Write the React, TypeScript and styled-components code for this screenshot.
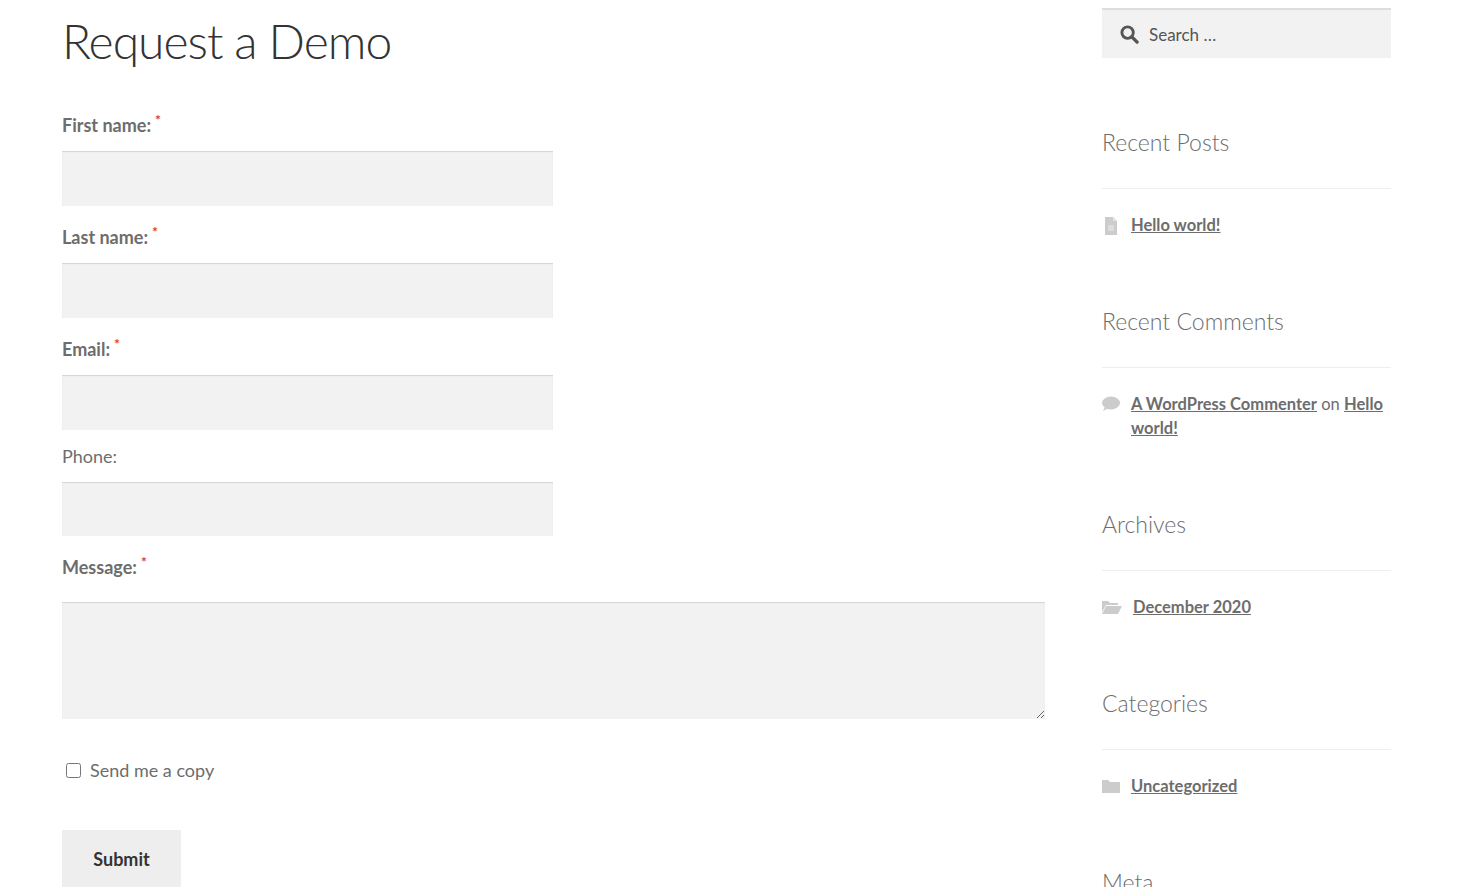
import React from "react";
import styled, { createGlobalStyle } from "styled-components";

const Global = createGlobalStyle`
  body { margin: 0; background: #fff; font-family: Lato, "Open Sans", sans-serif; color: #6d6d6d; }
  * { box-sizing: border-box; }
`;

const Page = styled.div`
  display: flex;
  padding-left: 62px;
  gap: 57px;
  height: 887px;
  overflow: hidden;
`;
const Main = styled.main`width: 983px; display: flex; flex-direction: column;`;
const Title = styled.h1`
  margin: 10px 0 35px;
  font-size: 48px; font-weight: 300; color: #333; letter-spacing: -1px; line-height: 62px;
`;
const Label = styled.label`
  display: block; font-size: 18px; font-weight: ${p => (p.$bold ? 700 : 400)};
  line-height: 26px; margin-bottom: 13px; color: #6d6d6d;
`;
const Req = styled.sup`color: #e2401c; font-size: 14px; margin-left: 4px;`;
const Input = styled.input`
  display: block; width: ${p => p.$w}px; height: ${p => p.$h}px; border: 0;
  background: #f2f2f2; box-shadow: inset 0 1px 1px rgba(0,0,0,.125);
  margin-bottom: 13px; font-family: inherit;
`;
const Area = styled.textarea`
  display: block; width: 983px; height: 121px; border: 0; resize: vertical;
  background: #f2f2f2; box-shadow: inset 0 1px 1px rgba(0,0,0,.125); margin-top: 9px;
`;
const Check = styled.label`
  display: flex; align-items: center; gap: 9px; margin: 40px 0 0 4px; font-size: 18px;
  input { margin: 0; width: 15px; height: 15px; }
`;
const Submit = styled.button`
  margin-top: 49px; width: 119px; height: 57px; border: 0; background: #eee; color: #333;
  font-family: inherit; font-weight: 700; font-size: 18px;
`;

const Side = styled.aside`width: 289px; padding-top: 8px;`;
const Search = styled.div`
  height: 50px; background: #f2f2f2; border-top: 2px solid #ddd; display: flex; align-items: center;
  padding-left: 18px; gap: 10px; font-size: 17px; color: #555;
`;
const Widget = styled.section`margin-top: ${p => p.$mt}px;`;
const WTitle = styled.h2`
  margin: 0; font-size: 23px; font-weight: 300; color: #6d6d6d; line-height: 30px;
  padding-bottom: 31px; border-bottom: 1px solid #eee;
`;
const Item = styled.div`
  display: flex; gap: 11px; margin-top: 24px; font-size: 16.5px; line-height: 24px;
  svg { flex: none; margin-top: 4px; }
`;
const A = styled.a`color: #6d6d6d; font-weight: 700; text-decoration: underline;`;

const Doc = () => (<svg width="18" height="18" viewBox="0 0 16 18"><path d="M2 0h8l4 4v14H2z" fill="#ccc"/><path d="M10 0v4h4" fill="#e6e6e6"/><path d="M5 9h6M5 11h6M5 13h6" stroke="#eee" strokeWidth="1"/></svg>);
const Bubble = () => (<svg width="18" height="16" viewBox="0 0 18 16"><ellipse cx="9" cy="7" rx="9" ry="6.5" fill="#ccc"/><path d="M3 11l-2 4 6-3z" fill="#ccc"/></svg>);
const OpenFolder = () => (<svg width="20" height="16" viewBox="0 0 20 16"><path d="M0 2h6l2 2h8v2H4L0 13z" fill="#ccc"/><path d="M4 7h16l-4 8H0z" fill="#ccc"/></svg>);
const Folder = () => (<svg width="18" height="16" viewBox="0 0 18 16"><path d="M0 2h6l2 2h10v11H0z" fill="#ccc"/></svg>);

export default function App() {
  return (
    <Page>
      <Global />
      <Main>
        <Title>Request a Demo</Title>
        <Label $bold>First name:<Req>*</Req></Label>
        <Input $w={491} $h={57} />
        <Label $bold>Last name:<Req>*</Req></Label>
        <Input $w={491} $h={57} />
        <Label $bold>Email:<Req>*</Req></Label>
        <Input $w={491} $h={57} />
        <Label>Phone:</Label>
        <Input $w={491} $h={56} />
        <Label $bold>Message:<Req>*</Req></Label>
        <Area />
        <Check><input type="checkbox" /> Send me a copy</Check>
        <div><Submit>Submit</Submit></div>
      </Main>
      <Side>
        <Search>
          <svg width="19" height="19" viewBox="0 0 20 20"><circle cx="8" cy="8" r="6" fill="none" stroke="#555" strokeWidth="3"/><path d="M12.5 12.5L18 18" stroke="#555" strokeWidth="3.5" strokeLinecap="round"/></svg>
          Search …
        </Search>
        <Widget $mt={69}>
          <WTitle>Recent Posts</WTitle>
          <Item><Doc /><A href="#">Hello world!</A></Item>
        </Widget>
        <Widget $mt={69}>
          <WTitle>Recent Comments</WTitle>
          <Item><Bubble /><span><A href="#">A WordPress Commenter</A> on <A href="#">Hello world!</A></span></Item>
        </Widget>
        <Widget $mt={69}>
          <WTitle>Archives</WTitle>
          <Item><OpenFolder /><A href="#">December 2020</A></Item>
        </Widget>
        <Widget $mt={69}>
          <WTitle>Categories</WTitle>
          <Item><Folder /><A href="#">Uncategorized</A></Item>
        </Widget>
        <Widget $mt={69}>
          <WTitle>Meta</WTitle>
        </Widget>
      </Side>
    </Page>
  );
}
